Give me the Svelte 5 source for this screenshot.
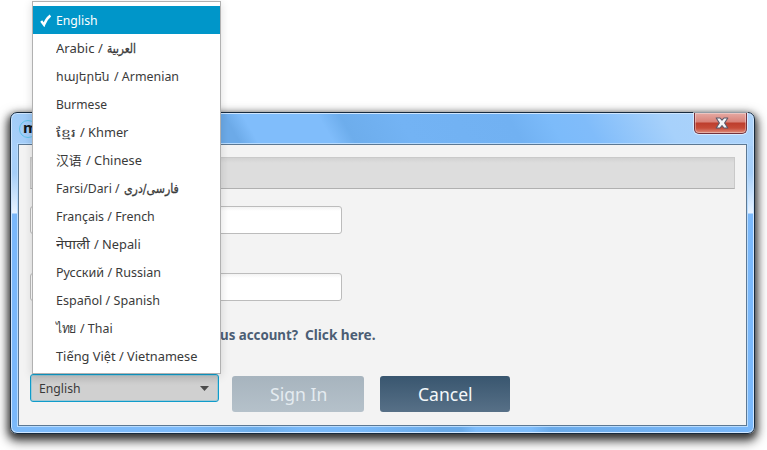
<script>
  const languages = [
    { parts: [['English', 42]], selected: true },
    { parts: [['Arabic /', 47], ['العربية', 29, 'arabic']] },
    { parts: [['հայերեն', 54], ['/ Armenian', 65]] },
    { parts: [['Burmese', 51]] },
    { parts: [['ខ្មែរ', 20, 'khmer'], ['/ Khmer', 48]] },
    { parts: [['汉语', 26, 'cjk'], ['/ Chinese', 56]] },
    { parts: [['Farsi/Dari /', 64], ['فارسی/دری', 55, 'arabic']] },
    { parts: [['Français / French', 99]] },
    { parts: [['नेपाली', 34, 'nepali'], ['/ Nepali', 47]] },
    { parts: [['Русский / Russian', 105]] },
    { parts: [['Español / Spanish', 104]] },
    { parts: [['ไทย', 20], ['/ Thai', 33]] },
    { parts: [['Tiếng Việt / Vietnamese', 141]] }
  ];

  // Condenses or stretches a label horizontally so it fills its given width.
  function fit(node, width) {
    const apply = () => {
      node.style.transform = 'none';
      const natural = node.offsetWidth;
      if (natural) node.style.transform = `scaleX(${width / natural})`;
    };
    apply();
    document.fonts.ready.then(apply);
  }
</script>

{#snippet label(text, width, kind = '')}
  <span class="slot" style:width="{width}px"><span class="fit {kind}" use:fit={width}>{text}</span></span>
{/snippet}

<div class="screen">
  <section class="window">
    <header class="titlebar">
      <span class="logo">m</span>
      <button class="close" aria-label="Close">
        <svg width="14" height="12" viewBox="0 0 14 12">
          <path d="M1.2 1H5L7 3.2 9 1h3.8L9.6 6l3.2 5H9L7 8.7 5 11H1.2L4.4 6Z" fill="#f5f5f7" stroke="#59596b" stroke-width="1.1" stroke-linejoin="round" />
        </svg>
      </button>
    </header>
    <main class="content">
      <div class="band"></div>
      <div class="field first"></div>
      <div class="field second"></div>
      <div class="forgot">
        {@render label('us account?', 78)}
        {@render label('Click here.', 71)}
      </div>
      <div class="actions">
        <div class="combo">
          {@render label('English', 42)}
          <svg class="arrow" width="9" height="5" viewBox="0 0 9 5"><path d="M0 0h9L4.5 5Z" fill="#4c4c4c" /></svg>
        </div>
        <button class="btn signin">{@render label('Sign In', 57)}</button>
        <button class="btn cancel">{@render label('Cancel', 55)}</button>
      </div>
    </main>
  </section>

  <ul class="menu">
    {#each languages as lang}
      <li class:selected={lang.selected}>
        <span class="tick">
          {#if lang.selected}
            <svg width="12" height="13" viewBox="0 0 12 13"><path d="M1.2 7 4 10.8C5.3 7 7.3 4 10.4 1.5" fill="none" stroke="#fff" stroke-width="2.4" /></svg>
          {/if}
        </span>
        {#each lang.parts as [text, width, kind]}
          {@render label(text, width, kind)}
        {/each}
      </li>
    {/each}
  </ul>
</div>

<style>
  :global(body) { margin: 0; background: #fff; overflow: hidden; }
  * { box-sizing: border-box; }
  .screen {
    position: relative;
    width: 767px;
    height: 450px;
    padding: 112px 0 0 10px;
    overflow: hidden;
    background: #fff;
    font-family: "Noto Sans", "Open Sans", "DejaVu Sans", "Noto Sans CJK SC", sans-serif;
    font-size: 12.8px;
    color: #3a3a3a;
  }
  .slot { display: inline-block; flex: none; white-space: nowrap; }
  .fit { display: inline-block; transform-origin: 0 50%; white-space: pre; }
  .window {
    width: 745px;
    height: 322px;
    padding: 0 7px 7px;
    border: 1px solid #182b3e;
    border-radius: 7px;
    background:
      linear-gradient(60deg, #a9d0f9 0, #7ab7f4 130px, #6caae8 180px, #6caae8 200px, #80bdfb 216px, #80bdfb 281px, #6dadec 300px, #73b3f4 350px, #71b1f2 445px, #7cbbfa 480px, #80bcfa 510px, #a7d1fb 580px, #add3fa 100%) 0 0 / 100% 33px no-repeat,
      linear-gradient(180deg, #a9d0f9 0 32px, #a5cef8 60px, #e8f3ff 100px, #7ab8fa 101px, #7ab8fa 309px, transparent 310px),
      linear-gradient(90deg, #7cbafa 0 170px, #6dade9 245px, #79b9f9 290px 350px, #6aaae8 430px 450px, #7dbcfb 465px 520px, #6aaae9 540px, #7ab8fa 100%);
    box-shadow: inset 0 0 0 1px #cfe6ff, 0 3px 7px 1px #00000095, 0 5px 11px 3px #00000088;
  }
  .titlebar { display: flex; height: 31px; justify-content: space-between; }
  .logo {
    width: 18px; height: 18px; margin: 7px 0 0 1px; padding-left: 3px;
    border: 1px solid #5fc2e8; border-radius: 50%;
    color: #101820; font: bold 15px/12px "Noto Sans", sans-serif;
  }
  .close {
    display: flex; align-items: center; justify-content: center;
    width: 53px; height: 21px; padding: 0 0 1px 2px;
    border: 1px solid #74323d; border-top: 0; border-radius: 0 0 5px 5px;
    background: linear-gradient(#e5aaa4 0, #d98278 9px, #bd3e2d 10px, #c64b38 15px, #df8e7e 100%);
    box-shadow: inset 0 0 0 1px #ffffff55, 0 0 0 1px #ffffff88;
  }
  .content {
    height: 282px;
    padding: 12px 11px 0;
    border: 1px solid #5c7893;
    background: #f3f3f3;
    box-shadow: 0 0 0 1px #b8dcff;
  }
  .band { height: 32px; border: 1px solid #c9c9c9; border-bottom-color: #b0b0b0; background: linear-gradient(#d2d2d2, #ddd 5px); }
  .field {
    width: 312px; height: 28px; border: 1px solid #bcbcbc; border-radius: 3px;
    background: linear-gradient(#f3f3f3, #fff 4px);
  }
  .first { margin-top: 17px; }
  .second { margin-top: 39px; }
  .forgot { display: flex; gap: 7px; height: 20px; margin: 24px 0 0 190px; line-height: 20px; font-size: 13.8px; font-weight: bold; color: #4b5d74; }
  .actions { display: flex; align-items: flex-start; margin-top: 29px; }
  .combo {
    display: flex; align-items: center; justify-content: space-between;
    width: 189px; height: 28px; padding: 0 9px 0 8px;
    border: 1px solid #0f9ccb; border-radius: 3px;
    background: linear-gradient(#c4c4c4, #d0d0d0 10px, #d0d0d0);
    box-shadow: inset 0 0 0 1px #89c4d6aa;
  }
  .btn {
    display: flex; justify-content: center; align-items: center;
    height: 36px; margin-top: 2px; padding: 0;
    border: 0; border-radius: 3px; color: #f4f8fa;
    font: 18.5px/28px "Noto Sans", sans-serif;
  }
  .signin { width: 132px; margin-left: 13px; background: linear-gradient(#a7b4be, #b5c1ca); color: #e4ebf0; }
  .cancel { width: 130px; margin-left: 16px; background: linear-gradient(#39566f, #577087); }
  .menu {
    position: absolute; left: 32px; top: 1px;
    width: 189px; height: 373px; margin: 0; padding: 4px 0 0;
    border: 1px solid #b1b1b1; background: #fff; list-style: none;
    box-shadow: 0 2px 9px #00000024;
  }
  .menu li { display: flex; align-items: center; gap: 4px; height: 28px; line-height: 28px; }
  .menu li.selected { background: #0096c9; color: #fff; }
  .tick { display: flex; align-items: center; width: 19px; height: 28px; padding-left: 7px; }
  .tick svg { flex: none; }
  .arabic { font-family: "DejaVu Sans", sans-serif; -webkit-text-stroke: 0.3px; }
  .khmer { font-size: 11.5px; }
  .nepali { font-size: 12px; }
  .cjk { font-family: "Noto Sans CJK SC", sans-serif; }
</style>
